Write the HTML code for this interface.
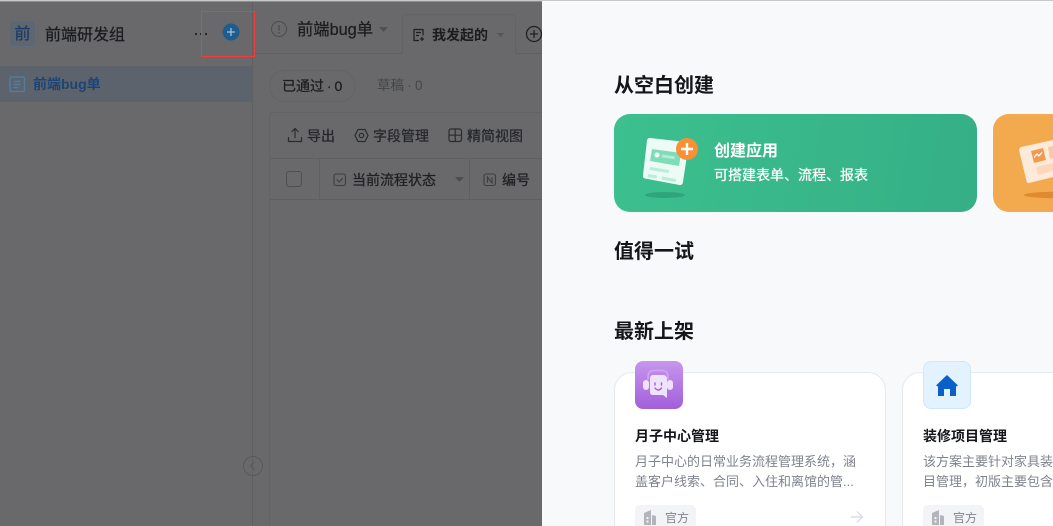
<!DOCTYPE html>
<html lang="zh"><head><meta charset="utf-8"><style>
html,body{margin:0;padding:0;background:#69696b}
#p{position:relative;width:1053px;height:526px;overflow:hidden;background:#69696b;font-family:"Liberation Sans","Noto Sans CJK SC",sans-serif}
#p div,#p svg{position:absolute}
.t{white-space:nowrap;line-height:20px}
.m{-webkit-text-stroke:.25px currentColor}
.l{background:#5f6062}
</style></head><body><div id="p">
<div style="left:0;top:0;width:1053px;height:1px;background:#c8c8c8;z-index:5"></div>
<div style="left:0;top:1px;width:1053px;height:1px;background:#8e8e90;z-index:5"></div>
<div style="left:0;top:66px;width:252px;height:36px;background:#5d636d"></div>
<div class="l" style="left:252px;top:0;width:1px;height:526px"></div>
<div class="l" style="left:253px;top:53px;width:150px;height:1px"></div>
<div class="l" style="left:515px;top:53px;width:27px;height:1px"></div>
<div style="left:9px;top:20px;width:27px;height:27px;border-radius:5px;background:#5e6670;box-shadow:inset 0 0 0 1px #626c78"></div>
<div class="t m" style="left:9px;top:25px;width:27px;text-align:center;font-size:16px;color:#1d3c66">前</div>
<div class="t m" style="left:45px;top:26px;font-size:16px;color:#1a1c1f">前端研发组</div>
<svg style="left:194px;top:32px" width="16" height="4"><circle cx="2" cy="2" r="1.100" fill="#222"/><circle cx="7" cy="2" r="1.100" fill="#222"/><circle cx="12" cy="2" r="1.100" fill="#222"/></svg>
<svg style="left:222px;top:23px" width="18" height="18"><circle cx="9" cy="9" r="8.500" fill="#1d5d90"/><path d="M9 5v8M5 9h8" stroke="#a9bfd2" stroke-width="1.300"/></svg>
<div style="left:201px;top:11px;width:52px;height:44px;border:1px solid #f23c3c"></div>
<svg style="left:9px;top:76px" width="17" height="17" fill="none" stroke="#4d7f9c" stroke-width="1.500"><rect x="1" y="1" width="14.500" height="14.500" rx="1.500"/><path d="M4.500 5.500h7M4.500 8.500h7M4.500 11.500h5"/></svg>
<div class="t" style="left:33px;top:74px;font-size:14px;font-weight:700;color:#1c4474">前端bug单</div>
<svg style="left:243px;top:456px" width="20" height="20" fill="none" stroke="#58595c"><circle cx="10" cy="10" r="9.500"/><path d="M11.500 6l-4 4 4 4"/></svg>

<svg style="left:270px;top:20px" width="18" height="18" fill="none" stroke="#4b4c4e" stroke-width="1"><circle cx="9" cy="9" r="7.500"/><path d="M9 5v5.500M9 12v1.500" stroke-width="1.300"/></svg>
<div class="t m" style="left:297px;top:20px;font-size:16.300px;color:#1c1d1f">前端bug单</div>
<svg style="left:379px;top:27px" width="10" height="6"><path d="M0 0h9L4.500 5z" fill="#505153"/></svg>
<div style="left:402px;top:14px;width:112px;height:39px;border:1px solid #626365;border-bottom:0;border-radius:5px 5px 0 0;background:#69696b"></div>
<svg style="left:412px;top:28px" width="14" height="14" fill="none" stroke="#1e1f21" stroke-width="1.200"><path d="M7 12.500H2V1.500h9v6M4 4.500h5M4 7.500h3M10 9v4M8 11h4"/></svg>
<div class="t" style="left:432px;top:25px;font-size:14px;font-weight:700;color:#1b1c1e">我发起的</div>
<svg style="left:497px;top:33px" width="8" height="5"><path d="M0 0h7L3.500 4z" fill="#555658"/></svg>
<svg style="left:525px;top:25px" width="17" height="18" fill="none" stroke="#202123" stroke-width="1.300"><circle cx="9" cy="9" r="7.500"/><path d="M9 5v8M5 9h8"/></svg>

<div style="left:269px;top:70px;width:85px;height:30px;border:1px solid #636466;border-radius:16px"></div>
<div class="t m" style="left:282px;top:76px;font-size:14px;word-spacing:-1px;color:#1c1d1f">已通过 · 0</div>
<div class="t" style="left:377px;top:76px;font-size:13.500px;word-spacing:-.5px;color:#444547">草稿 · 0</div>

<div style="left:269px;top:112px;width:273px;height:414px;border:1px solid #626365;border-right:0;border-bottom:0;box-sizing:border-box;border-radius:4px 0 0 0"></div>
<div class="l" style="left:270px;top:158px;width:272px;height:1px"></div>
<div class="l" style="left:270px;top:199px;width:272px;height:1px"></div>
<div class="l" style="left:319px;top:159px;width:1px;height:40px"></div>
<div class="l" style="left:469px;top:159px;width:1px;height:40px"></div>
<svg style="left:287px;top:127px" width="16" height="16" fill="none" stroke="#2b2c2e" stroke-width="1.200"><path d="M8 11V2M4.500 5L8 1.500 11.500 5M1.500 10v4.500h13V10"/></svg>
<div class="t m" style="left:307px;top:126px;font-size:14px;color:#25262a">导出</div>
<svg style="left:354px;top:128px" width="15" height="15" fill="none" stroke="#2b2c2e" stroke-width="1.200"><path d="M4 1.500h7L14 7.500 11 13.500H4L1 7.500z"/><circle cx="7.500" cy="7.500" r="2.200"/></svg>
<div class="t m" style="left:373px;top:126px;font-size:14px;color:#25262a">字段管理</div>
<svg style="left:448px;top:128px" width="15" height="15" fill="none" stroke="#2b2c2e" stroke-width="1.200"><rect x="1" y="1" width="12.500" height="12.500" rx="2"/><path d="M7.200 1v12.500M1 7.200h12.500"/></svg>
<div class="t m" style="left:467px;top:126px;font-size:14px;color:#25262a">精简视图</div>
<div style="left:286px;top:171px;width:14px;height:14px;border:1px solid #4e4f51;border-radius:3px"></div>
<svg style="left:333px;top:173px" width="14" height="14" fill="none" stroke="#3d3e40" stroke-width="1.100"><rect x="1" y="1" width="11.500" height="11.500" rx="2"/><path d="M3.800 6.500l2.500 2.500 3.500-4"/></svg>
<div class="t m" style="left:352px;top:170px;font-size:14px;color:#202123">当前流程状态</div>
<svg style="left:455px;top:177px" width="10" height="6"><path d="M0 0h9L4.500 5z" fill="#4c4d4f"/></svg>
<svg style="left:483px;top:173px" width="14" height="14" fill="none" stroke="#3d3e40" stroke-width="1.100"><rect x="1" y="1" width="11.500" height="11.500" rx="2"/><path d="M4.500 10V4l4.500 6V4"/></svg>
<div class="t m" style="left:502px;top:170px;font-size:14px;color:#202123">编号</div>

<div style="left:542px;top:1px;width:511px;height:525px;background:#f8f9fb;z-index:6"></div>
<div style="left:542px;top:0;width:511px;height:1px;background:#c8c8c8;z-index:6"></div>
<div class="t" style="left:614px;top:76px;font-size:20px;font-weight:700;color:#14161a;z-index:7">从空白创建</div>
<div style="z-index:7;left:0;top:0;width:1053px;height:526px">
<div style="left:614px;top:114px;width:363px;height:98px;border-radius:16px;background:linear-gradient(100deg,#3cc08f,#35af86)"></div>
<svg style="left:640px;top:134px" width="60" height="66">
<ellipse cx="25" cy="61" rx="20" ry="3" fill="#2fa57c"/>
<path d="M10 4L46 8Q49 8.500 48.500 11.500L43 48Q42.500 51.500 39.500 51L5 44.500Q2.500 44 3 41L7 6.500Q7.500 3.800 10 4Z" fill="#ecfbf5"/>
<path d="M12 15L41 19 39 32 10 27Z" fill="#7fdcb8"/>
<circle cx="17" cy="21" r="2.500" fill="#fff"/><path d="M22 20.500l13 1.800-.4 3-13-1.800z" fill="#b4ebd3"/>
<path d="M10 33l19 3-.4 3-19-3zM8 40l9 1.500-.4 3-9-1.500zM22 42.500l14 2.500-.4 3-14-2.500z" fill="#b9eed9"/>
<circle cx="47" cy="15" r="11" fill="#fb8f36"/><path d="M47 9v12M41 15h12" stroke="#fff" stroke-width="2.400"/>
</svg>
<div class="t" style="left:714px;top:142px;font-size:16px;font-weight:700;color:#fff">创建应用</div>
<div class="t m" style="left:714px;top:165px;font-size:14px;color:#fff">可搭建表单、流程、报表</div>
<div style="left:993px;top:114px;width:80px;height:98px;border-radius:16px;background:#f3a94e"></div>
<svg style="left:1015px;top:136px" width="38" height="66">
<ellipse cx="40" cy="59" rx="31" ry="3.200" fill="#e08a30"/>
<path d="M6 11L38 4V41L14 47Q12 47.500 11.500 45L4 14Q4 12 6 11Z" fill="#fdeadb"/>
<path d="M16 15l12-3 3 12-12 3z" fill="#f19a50"/>
<path d="M19 21.500l3-3.500 2 1.800 3-3.300" stroke="#fff" stroke-width="1.300" fill="none"/>
<path d="M33 11l5-1v12l-3 1z" fill="#f6c9a2"/><path d="M21 31l17-4v8l-15 4z" fill="#fbd8bc"/>
</svg>

<div class="t" style="left:614px;top:242px;font-size:20px;font-weight:700;color:#14161a">值得一试</div>
<div class="t" style="left:614px;top:322px;font-size:20px;font-weight:700;color:#14161a">最新上架</div>

<div style="left:614px;top:372px;width:272px;height:170px;box-sizing:border-box;background:#fff;border:1px solid #e6e8f0;border-radius:18px"></div>
<div style="left:635px;top:361px;width:48px;height:48px;border-radius:8px;background:linear-gradient(#c796ee,#a15fd9)"></div>
<svg style="left:642px;top:368px" width="34" height="34" fill="none">
<path d="M6 12V9q0-6.500 6-6.500h8q6 0 6 6.500v3" stroke="#cfa6f0" stroke-width="1.500"/>
<rect x="1" y="12" width="6" height="10" rx="3" fill="#efe2fb"/><rect x="25" y="12" width="6" height="10" rx="3" fill="#efe2fb"/>
<path d="M11 7h10q4 0 4 4v19l-4-3H11q-3 0-3-3V11q0-4 3-4z" fill="#efe2fb"/>
<path d="M13 15v2M19.500 15v2M13 20q3.200 4 6.500 0" stroke="#a15fd9" stroke-width="1.400" stroke-linecap="round"/>
</svg>
<div class="t" style="left:635px;top:426px;font-size:14px;font-weight:700;color:#14161a">月子中心管理</div>
<div class="t" style="left:635px;top:452px;font-size:13px;color:#7f838c">月子中心的日常业务流程管理系统，涵</div>
<div class="t" style="left:635px;top:472px;font-size:13px;color:#7f838c">盖客户线索、合同、入住和离馆的管...</div>
<div style="left:635px;top:505px;width:61px;height:26px;border-radius:5px;background:#f3f4f8"></div>
<svg style="left:643px;top:509px" width="14" height="16" fill="#b2b5bb"><path d="M1 4l7-3v15H1z"/><path d="M9 6l4 1v9H9z"/><path d="M3.500 8h2v2h-2zM3.500 11.500h2v2h-2z" fill="#f3f4f8"/></svg>
<div class="t" style="left:665px;top:508px;font-size:12px;color:#7f838c">官方</div>
<svg style="left:850px;top:510px" width="14" height="14" fill="none" stroke="#d5d8e0" stroke-width="1.200"><path d="M1 7h11.500M7 1.500L12.500 7 7 12.500"/></svg>

<div style="left:902px;top:372px;width:272px;height:170px;box-sizing:border-box;background:#fff;border:1px solid #e6e8f0;border-radius:18px"></div>
<div style="left:923px;top:361px;width:48px;height:48px;box-sizing:border-box;border-radius:8px;background:#e2f2ff;border:1px solid #cfe7fb"></div>
<svg style="left:936px;top:374px" width="22" height="22"><path d="M11 1L22 11.500 20 12.500V22h-6v-7H8v7H2V12.500L0 11.500z" fill="#0a5fc9"/></svg>
<div class="t" style="left:923px;top:426px;font-size:14px;font-weight:700;color:#14161a">装修项目管理</div>
<div class="t" style="left:923px;top:452px;font-size:13px;color:#7f838c">该方案主要针对家具装修行业的装修项</div>
<div class="t" style="left:923px;top:472px;font-size:13px;color:#7f838c">目管理，初版主要包含客户、合同管理</div>
<div style="left:923px;top:505px;width:61px;height:26px;border-radius:5px;background:#f3f4f8"></div>
<svg style="left:931px;top:509px" width="14" height="16" fill="#b2b5bb"><path d="M1 4l7-3v15H1z"/><path d="M9 6l4 1v9H9z"/><path d="M3.500 8h2v2h-2zM3.500 11.500h2v2h-2z" fill="#f3f4f8"/></svg>
<div class="t" style="left:953px;top:508px;font-size:12px;color:#7f838c">官方</div>
</div>
</div></body></html>
